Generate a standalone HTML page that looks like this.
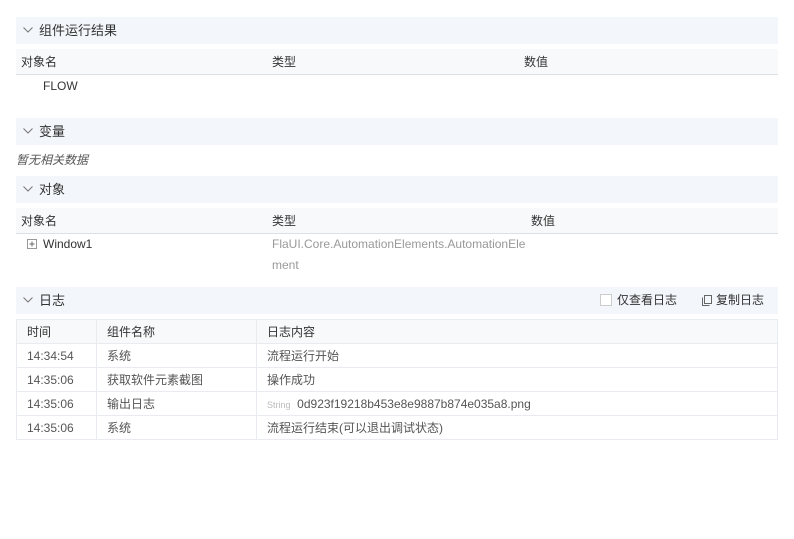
<!DOCTYPE html>
<html><head><meta charset="utf-8"><style>
*{margin:0;padding:0;box-sizing:border-box}
body{width:794px;height:539px;background:#fff;font-family:"Liberation Sans","Noto Sans CJK SC",sans-serif;font-size:12px;color:#333;position:relative;overflow:hidden}
.abs{position:absolute}
.hd{position:absolute;left:16px;width:762px;height:27px;background:#f3f6fa;font-size:13px;line-height:27px;padding-left:23px;color:#333}
.hd svg{position:absolute;left:7px;top:10px}
.th{position:absolute;left:16px;width:762px;height:26px;background:#f8f9fa;border-bottom:1px solid #dcdfe6;line-height:26px}
.th span{position:absolute}
table{position:absolute;left:16px;top:319px;width:762px;border-collapse:collapse;font-size:12px}
td{border:1px solid #e8ebf0;height:24px;padding-left:10px;color:#555}
tr.h td{background:#f8f9fa;color:#333}
</style></head><body>
<div class="hd" style="top:17px"><svg width="10" height="6" viewBox="0 0 10 6"><path d="M0.5 0.5L5 5L9.5 0.5" stroke="#777" fill="none"/></svg>组件运行结果</div>
<div class="th" style="top:49px"><span style="left:5px">对象名</span><span style="left:256px">类型</span><span style="left:508px">数值</span></div>
<div class="abs" style="left:43px;top:79px">FLOW</div>
<div class="hd" style="top:118px"><svg width="10" height="6" viewBox="0 0 10 6"><path d="M0.5 0.5L5 5L9.5 0.5" stroke="#777" fill="none"/></svg>变量</div>
<div class="abs" style="left:16px;top:151px;font-style:italic;color:#555">暂无相关数据</div>
<div class="hd" style="top:176px"><svg width="10" height="6" viewBox="0 0 10 6"><path d="M0.5 0.5L5 5L9.5 0.5" stroke="#777" fill="none"/></svg>对象</div>
<div class="th" style="top:208px"><span style="left:5px">对象名</span><span style="left:256px">类型</span><span style="left:515px">数值</span></div>
<svg class="abs" style="left:27px;top:239px" width="10" height="10" viewBox="0 0 10 10"><rect x="0.5" y="0.5" width="9" height="9" fill="none" stroke="#999"/><path d="M2.5 5H7.5M5 2.5V7.5" stroke="#666"/></svg>
<div class="abs" style="left:43px;top:237px">Window1</div>
<div class="abs" style="left:272px;top:234px;color:#999;line-height:21px;width:256px">FlaUI.Core.AutomationElements.AutomationEle<br>ment</div>
<div class="hd" style="top:287px"><svg width="10" height="6" viewBox="0 0 10 6"><path d="M0.5 0.5L5 5L9.5 0.5" stroke="#777" fill="none"/></svg>日志
<span class="abs" style="left:584px;top:7px;width:12px;height:12px;border:1px solid #ccc;background:#fff"></span>
<span class="abs" style="left:601px;font-size:12px">仅查看日志</span>
<svg class="abs" style="left:686px;top:8px" width="10" height="11" viewBox="0 0 10 11"><rect x="2.5" y="0.5" width="7" height="8" fill="none" stroke="#666"/><path d="M0.5 2.5V10.5H7.5" stroke="#666" fill="none"/></svg>
<span class="abs" style="left:700px;font-size:12px">复制日志</span></div>
<table>
<tr class="h"><td style="width:80px">时间</td><td style="width:160px">组件名称</td><td>日志内容</td></tr>
<tr><td>14:34:54</td><td>系统</td><td>流程运行开始</td></tr>
<tr><td>14:35:06</td><td>获取软件元素截图</td><td>操作成功</td></tr>
<tr><td>14:35:06</td><td>输出日志</td><td><span style="color:#bbb;font-size:9px">String</span>&nbsp; 0d923f19218b453e8e9887b874e035a8.png</td></tr>
<tr><td>14:35:06</td><td>系统</td><td>流程运行结束(可以退出调试状态)</td></tr>
</table>
</body></html>
